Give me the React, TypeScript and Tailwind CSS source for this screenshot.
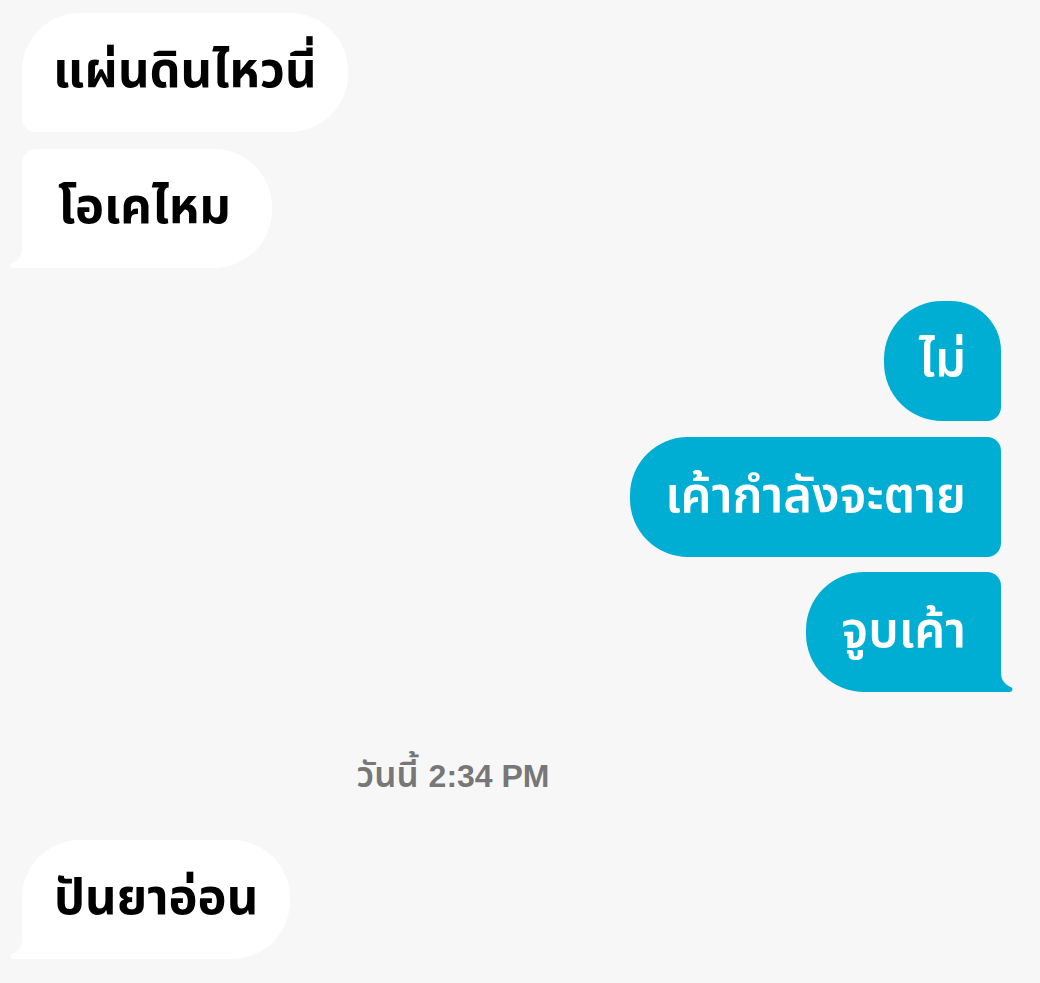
import React from "react";

const thai = "font-['Noto_Sans_Thai','Noto_Sans','DejaVu_Sans',sans-serif]";

function LeftTail() {
  return (
    <svg
      className="absolute left-[-12px] bottom-0"
      width="30"
      height="26"
      viewBox="0 0 30 26"
    >
      <path d="M12 0 V7 C12 15 7 19 1.5 21.5 C-0.5 22.5 0.5 26 3.5 26 H30 V0 Z" fill="#ffffff" />
    </svg>
  );
}

function RightTail() {
  return (
    <svg
      className="absolute right-[-14px] bottom-0"
      width="32"
      height="26"
      viewBox="0 0 32 26"
    >
      <path d="M18 0 V7 C18 15 23 19 28.5 21.5 C30.5 22.5 29.5 26 26.5 26 H0 V0 Z" fill="#00aed3" />
    </svg>
  );
}

function Incoming({
  text,
  corners,
  tail,
  px = "px-[34px]",
}: {
  text: string;
  corners: string;
  tail?: boolean;
  px?: string;
}) {
  return (
    <div className="flex pl-[22px]">
      <div
        className={`relative h-[119px] flex items-center bg-white text-black text-[49px] leading-none font-bold ${px} ${corners}`}
      >
        {tail && <LeftTail />}
        <span className="relative">{text}</span>
      </div>
    </div>
  );
}

function Outgoing({
  text,
  corners,
  tail,
}: {
  text: string;
  corners: string;
  tail?: boolean;
}) {
  return (
    <div className="flex justify-end pr-[39px]">
      <div
        className={`relative h-[120px] flex items-center px-[35px] bg-[#00aed3] text-white text-[49px] leading-none font-semibold ${corners}`}
      >
        {tail && <RightTail />}
        <span className="relative">{text}</span>
      </div>
    </div>
  );
}

export default function App() {
  return (
    <div className={`w-[1040px] h-[983px] overflow-hidden bg-[#f7f7f7] ${thai}`}>
      <div className="flex flex-col pt-[13px]">
        <Incoming
          text="แผ่นดินไหวนี่"
          px="px-[31px]"
          corners="rounded-tl-[58px] rounded-tr-[58px] rounded-br-[58px] rounded-bl-[14px]"
        />
        <div className="h-[17px]" />
        <Incoming
          text="โอเคไหม"
          px="pl-[36px] pr-[41px]"
          corners="rounded-tl-[14px] rounded-tr-[58px] rounded-br-[58px] rounded-bl-none"
          tail
        />

        <div className="h-[33px]" />
        <Outgoing
          text="ไม่"
          corners="rounded-tl-[58px] rounded-tr-[50px] rounded-br-[14px] rounded-bl-[58px]"
        />
        <div className="h-[16px]" />
        <Outgoing
          text="เค้ากำลังจะตาย"
          corners="rounded-tl-[58px] rounded-tr-[14px] rounded-br-[14px] rounded-bl-[58px]"
        />
        <div className="h-[15px]" />
        <Outgoing
          text="จูบเค้า"
          corners="rounded-tl-[58px] rounded-tr-[14px] rounded-br-none rounded-bl-[58px]"
          tail
        />

        <div className="h-[64px]" />
        <div className="flex justify-center items-baseline gap-[10px] pr-[134px] h-[40px] text-[#777777]">
          <span className="text-[35px] leading-[40px] font-semibold">วันนี้</span>
          <span className="text-[32px] leading-[40px] font-bold font-['Liberation_Sans',sans-serif]">
            2:34 PM
          </span>
        </div>

        <div className="h-[44px]" />
        <Incoming
          text="ปันยาอ่อน"
          px="px-[32px]"
          corners="rounded-tl-[58px] rounded-tr-[58px] rounded-br-[58px] rounded-bl-none"
          tail
        />
      </div>
    </div>
  );
}
